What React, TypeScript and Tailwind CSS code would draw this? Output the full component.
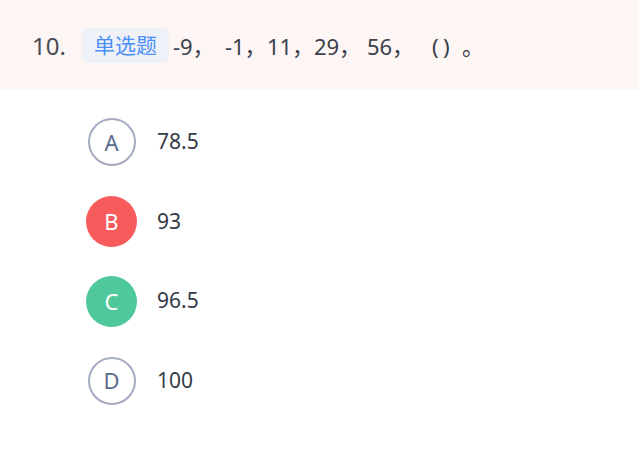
import React from 'react';

interface Option {
  key: string;
  text: string;
  state: 'normal' | 'wrong' | 'right';
}

const options: Option[] = [
  { key: 'A', text: '78.5', state: 'normal' },
  { key: 'B', text: '93', state: 'wrong' },
  { key: 'C', text: '96.5', state: 'right' },
  { key: 'D', text: '100', state: 'normal' },
];

const font = { fontFamily: '"Noto Sans", "Noto Sans CJK SC", sans-serif' };

const App: React.FC = () => {
  return (
    <div className="w-[639px] h-[465px] bg-white" style={font}>
      {/* Question header */}
      <div className="h-[90px] bg-[#fef5f5] flex items-center pl-[32px]">
        <span className="text-[24px] text-[#474c56] leading-none translate-y-[1px]">10.</span>
        <span className="ml-[16px] h-[35px] px-[12px] flex items-center rounded-[7px] bg-[#eff1f8] text-[#4a8ff6] text-[21px] leading-none">
          单选题
        </span>
        <span className="ml-[4px] flex text-[22px] text-[#3a414d] leading-none whitespace-pre translate-y-[1px]">
          <span className="w-[52px] shrink-0">-9，</span>
          <span className="w-[42px] shrink-0">-1，</span>
          <span className="w-[47px] shrink-0">11，</span>
          <span className="w-[53px] shrink-0">29，</span>
          <span className="w-[65px] shrink-0">56，</span>
          <span className="w-[11px] shrink-0">(</span>
          <span className="w-[19px] shrink-0">)</span>
          <span className="shrink-0">。</span>
        </span>
      </div>

      {/* Options */}
      <div className="flex flex-col gap-[29.5px] pt-[27px] pl-[86px]">
        {options.map((opt) => (
          <div key={opt.key} className="flex items-center h-[50px]">
            <div className="w-[51px] h-[50px] flex items-center justify-center">
              {opt.state === 'normal' ? (
                <div className="w-[48px] h-[48px] rounded-full border-2 border-[#a5abc2] flex items-center justify-center text-[22px] text-[#5a6a8e]">
                  {opt.key}
                </div>
              ) : (
                <div
                  className={`w-[51px] h-[51px] rounded-full flex items-center justify-center text-[22px] text-white ${
                    opt.state === 'wrong' ? 'bg-[#f75b5b]' : 'bg-[#4fc99b]'
                  }`}
                >
                  {opt.key}
                </div>
              )}
            </div>
            <span className="ml-[20px] text-[21px] text-[#343b46]">{opt.text}</span>
          </div>
        ))}
      </div>
    </div>
  );
};

export default App;
